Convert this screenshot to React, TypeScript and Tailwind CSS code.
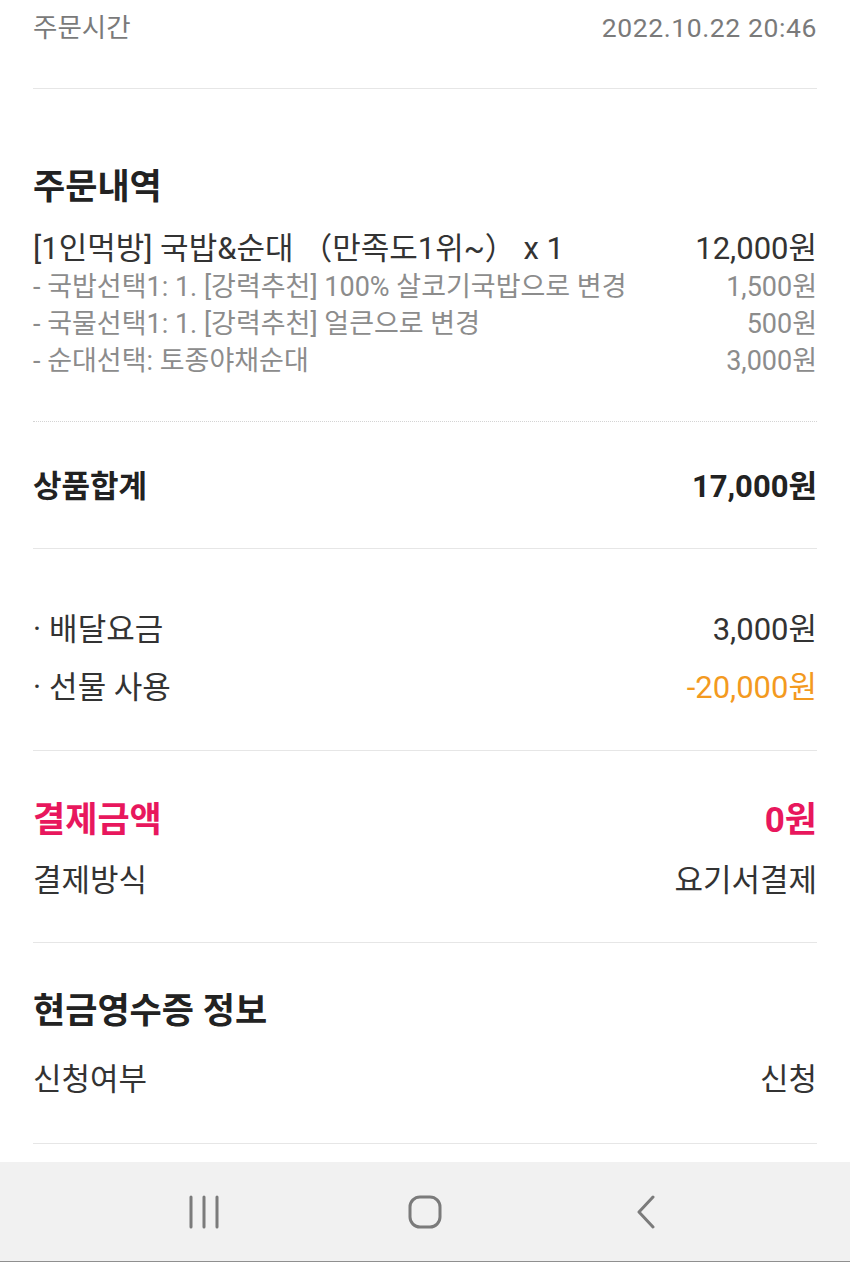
import React from 'react';

const Row = ({ left, right, className }: { left: React.ReactNode; right: React.ReactNode; className: string }) => (
    <div className={`flex flex-row items-center justify-between leading-[1.2] ${className}`}>
        <div>{left}</div>
        <div>{right}</div>
    </div>
);

const Divider = ({ className = '' }: { className?: string }) => <div className={`h-px bg-[#e6e6e6] ${className}`}></div>;

const App = () => {
    const options = [
        { name: '- 국밥선택1: 1. [강력추천] 100% 살코기국밥으로 변경', price: '1,500원' },
        { name: '- 국물선택1: 1. [강력추천] 얼큰으로 변경', price: '500원' },
        { name: '- 순대선택: 토종야채순대', price: '3,000원' },
    ];

    return (
        <div className="w-[850px] h-[1262px] bg-white flex flex-col font-['Roboto','Noto_Sans_CJK_KR',sans-serif] overflow-hidden">
            <div className='px-[33px] flex flex-col flex-1'>
                {/* order time */}
                <div className='h-[56px] flex flex-row items-center justify-between text-[26.5px] leading-[1.2] text-[#7a7a7a]'>
                    <span>주문시간</span>
                    <span className='tracking-[0.6px]'>2022.10.22 20:46</span>
                </div>
                <Divider className='mt-[32px]' />

                {/* order details */}
                <div className='mt-[79px] h-[40px] flex items-center text-[35px] leading-[1.2] font-bold text-[#222]'>주문내역</div>
                <Row
                    className='mt-[20px] h-[41px] text-[31px] text-[#333]'
                    left={<span>[1인먹방] 국밥&amp;순대 （만족도1위~） x 1</span>}
                    right='12,000원'
                />
                {options.map((o) => (
                    <Row key={o.name} className='h-[37px] text-[27px] text-[#8c8c8c]' left={o.name} right={o.price} />
                ))}
                <div className='mt-[41px] border-t border-dotted border-[#d4d4d4]'></div>

                <Row
                    className='mt-[45px] h-[40px] text-[31px] font-bold text-[#222]'
                    left='상품합계'
                    right='17,000원'
                />
                <Divider className='mt-[41px]' />

                <div className='mt-[52px] flex flex-col text-[31px] text-[#333]'>
                    <Row
                        className='h-[58px]'
                        left={<span className='flex flex-row gap-[8px]'><span>·</span><span>배달요금</span></span>}
                        right='3,000원'
                    />
                    <Row
                        className='h-[58px]'
                        left={<span className='flex flex-row gap-[8px]'><span>·</span><span>선물 사용</span></span>}
                        right={<span className='text-[#f39a1f]'>-20,000원</span>}
                    />
                </div>
                <Divider className='mt-[33px]' />

                <Row
                    className='mt-[39px] h-[61px] text-[35px] font-bold text-[#e8175d]'
                    left='결제금액'
                    right='0원'
                />
                <Row className='h-[60px] text-[31px] text-[#333]' left='결제방식' right='요기서결제' />
                <Divider className='mt-[31px]' />

                <div className='mt-[39px] h-[60px] flex items-center text-[35px] leading-[1.2] font-bold text-[#222]'>현금영수증 정보</div>
                <Row className='mt-[8px] h-[60px] text-[31px] text-[#333]' left='신청여부' right='신청' />
                <Divider className='mt-[33px]' />
            </div>

            {/* android navigation bar */}
            <div className='h-[100px] bg-[#f1f1f1] border-b border-[#8f8f8f] flex flex-row items-center justify-center gap-[161px]'>
                <div className='w-[60px] flex justify-center'>
                    <svg width="32" height="34" viewBox="0 0 32 34" fill="none" stroke="#7b7b7b" strokeWidth="3" strokeLinecap="round">
                        <path d="M3 2v30M16 2v30M29 2v30" />
                    </svg>
                </div>
                <div className='w-[60px] flex justify-center'>
                    <svg width="34" height="34" viewBox="0 0 34 34" fill="none" stroke="#7b7b7b" strokeWidth="3">
                        <rect x="2" y="2" width="30" height="30" rx="10" />
                    </svg>
                </div>
                <div className='w-[60px] flex justify-center'>
                    <svg width="20" height="34" viewBox="0 0 20 34" fill="none" stroke="#7b7b7b" strokeWidth="3" strokeLinecap="round" strokeLinejoin="round">
                        <path d="M17 2L3 17l14 15" />
                    </svg>
                </div>
            </div>
        </div>
    );
};

export default App;
